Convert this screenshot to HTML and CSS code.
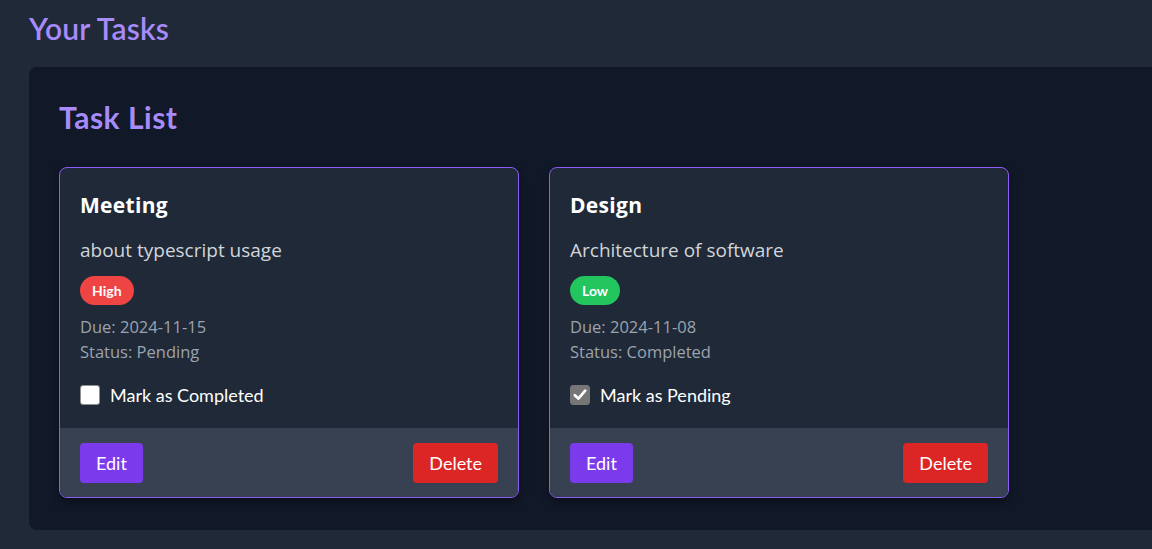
FILE: index.html
```html
<!DOCTYPE html>
<html lang="en">
<head>
<meta charset="utf-8">
<title>Your Tasks</title>
<link rel="stylesheet" href="styles.css">
</head>
<body>
<main class="page">
  <h1 class="page-title">Your Tasks</h1>
  <section class="panel">
    <h2 class="panel-title">Task List</h2>
    <div class="cards">
      <article class="card">
        <div class="card-body">
          <h3 class="card-title">Meeting</h3>
          <p class="card-desc">about typescript usage</p>
          <span class="badge badge-high">High</span>
          <p class="meta meta-first">Due: 2024-11-15</p>
          <p class="meta">Status: Pending</p>
          <label class="toggle">
            <span class="box"></span>
            <span class="toggle-text">Mark as Completed</span>
          </label>
        </div>
        <div class="card-foot">
          <button class="btn btn-edit">Edit</button>
          <button class="btn btn-delete">Delete</button>
        </div>
      </article>
      <article class="card">
        <div class="card-body">
          <h3 class="card-title">Design</h3>
          <p class="card-desc">Architecture of software</p>
          <span class="badge badge-low">Low</span>
          <p class="meta meta-first">Due: 2024-11-08</p>
          <p class="meta">Status: Completed</p>
          <label class="toggle">
            <span class="box box-checked"><svg viewBox="0 0 20 20" width="20" height="20"><path d="M4.2 10.2 L8.2 14 L15.8 5.2" fill="none" stroke="#ffffff" stroke-width="3" stroke-linecap="round" stroke-linejoin="round"/></svg></span>
            <span class="toggle-text">Mark as Pending</span>
          </label>
        </div>
        <div class="card-foot">
          <button class="btn btn-edit">Edit</button>
          <button class="btn btn-delete">Delete</button>
        </div>
      </article>
    </div>
  </section>
</main>
</body>
</html>
```
FILE: styles.css
```css
* { box-sizing: border-box; }

html, body {
  margin: 0;
  padding: 0;
  background: #1f2937;
  overflow: hidden;
}

body {
  font-family: Lato, "Noto Sans", sans-serif;
  color: #ffffff;
}

.page {
  padding: 10px 0 20px 29px;
}

.page-title {
  margin: 0 0 21px;
  font-size: 30px;
  line-height: 36px;
  font-weight: 600;
  letter-spacing: 0.2px;
  color: #a78bfa;
}

.panel {
  background: #111827;
  border-radius: 8px 0 0 8px;
  padding: 32px 30px;
  margin-right: -40px;
}

.panel-title {
  margin: 0 0 32px;
  font-size: 30px;
  line-height: 36px;
  font-weight: 700;
  letter-spacing: 0.5px;
  color: #a78bfa;
}

.cards {
  display: grid;
  grid-template-columns: repeat(2, 460px);
  gap: 30px;
}

.card {
  background: #1f2937;
  border: 1px solid #8b5cf6;
  border-radius: 8px;
  overflow: hidden;
  box-shadow: 0 4px 8px rgba(0, 0, 0, 0.35);
  display: flex;
  flex-direction: column;
}

.card-body {
  padding: 23px 20px 19px;
  display: flex;
  flex-direction: column;
  align-items: flex-start;
}

.card-title {
  margin: 0;
  font-family: "Open Sans", "Noto Sans", sans-serif;
  font-size: 21px;
  line-height: 28px;
  font-weight: 700;
  letter-spacing: 0.3px;
  color: #ffffff;
}

.card-desc {
  margin: 17px 0 0;
  font-family: "Open Sans", "Noto Sans", sans-serif;
  font-size: 19px;
  line-height: 28px;
  color: #d1d5db;
}

.badge {
  margin-top: 12px;
  padding: 4px 12px;
  font-size: 14px;
  line-height: 21px;
  font-weight: 700;
  border-radius: 999px;
  color: #ffffff;
}

.badge-high { background: #ef4444; }
.badge-low { background: #22c55e; }

.meta {
  margin: 0;
  font-family: "Open Sans", "Noto Sans", sans-serif;
  font-size: 16.5px;
  line-height: 25px;
  color: #9ca3af;
}

.meta-first { margin-top: 9px; }

.toggle {
  margin-top: 17px;
  display: flex;
  align-items: center;
  gap: 10px;
  font-size: 18px;
  line-height: 28px;
  color: #ffffff;
}

.box {
  width: 20px;
  height: 20px;
  border-radius: 3px;
  background: #ffffff;
  border: 1px solid #8f8f8f;
  display: flex;
  align-items: center;
  justify-content: center;
}

.box svg { display: block; }

.box-checked {
  background: #767676;
  border-color: #767676;
}

.card-foot {
  background: #374151;
  padding: 15px 20px 14px;
  display: flex;
  justify-content: space-between;
  align-items: center;
}

.btn {
  font-family: inherit;
  font-size: 18px;
  line-height: 24px;
  padding: 8px 16px;
  border: none;
  border-radius: 4px;
  color: #ffffff;
  cursor: pointer;
}

.btn-edit { background: #7c3aed; }
.btn-delete { background: #dc2626; }
```
